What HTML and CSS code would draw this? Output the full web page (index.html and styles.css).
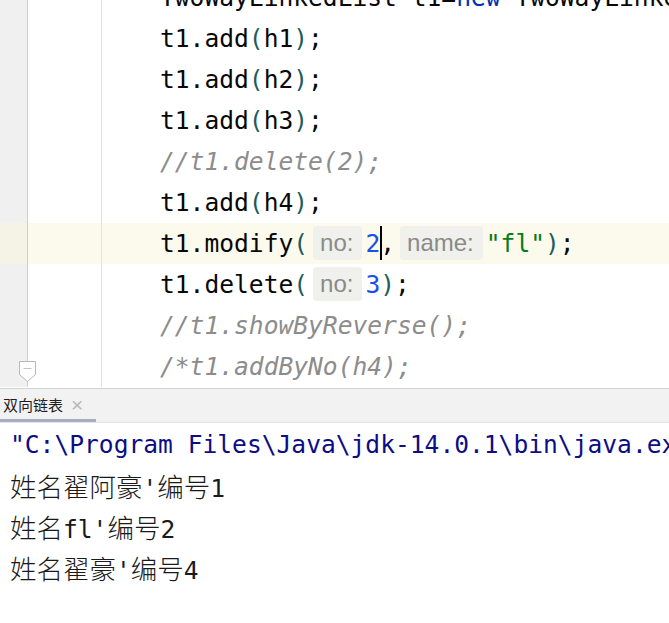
FILE: index.html
```html
<!DOCTYPE html>
<html lang="zh-CN">
<head>
    <meta charset="UTF-8">
    <title>双向链表</title>
    <link rel="stylesheet" href="styles.css">
</head>
<body>
    <!-- 编辑器区域 -->
    <div class="editor">
        <div class="lines">
            <div class="line"><div class="gut"></div><div class="fold"></div><div class="txt">TwoWayLinkedList t1=<span class="kw">new</span> TwoWayLinkedList();</div></div>
            <div class="line"><div class="gut"></div><div class="fold"></div><div class="txt">t1.add<span class="par">(</span>h1<span class="par">)</span>;</div></div>
            <div class="line"><div class="gut"></div><div class="fold"></div><div class="txt">t1.add<span class="par">(</span>h2<span class="par">)</span>;</div></div>
            <div class="line"><div class="gut"></div><div class="fold"></div><div class="txt">t1.add<span class="par">(</span>h3<span class="par">)</span>;</div></div>
            <div class="line"><div class="gut"></div><div class="fold"></div><div class="txt"><span class="cmt">//t1.delete(2);</span></div></div>
            <div class="line"><div class="gut"></div><div class="fold"></div><div class="txt">t1.add<span class="par">(</span>h4<span class="par">)</span>;</div></div>
            <div class="line current"><div class="gut"></div><div class="fold"></div><div class="txt">t1.modify<span class="par">(</span><span class="hint">no:</span><span class="num">2</span><span class="caret"></span>,<span class="hint">name:</span><span class="str">"fl"</span><span class="par">)</span>;</div></div>
            <div class="line"><div class="gut"></div><div class="fold"></div><div class="txt">t1.delete<span class="par">(</span><span class="hint">no:</span><span class="num">3</span><span class="par">)</span>;</div></div>
            <div class="line"><div class="gut"></div><div class="fold"></div><div class="txt"><span class="cmt">//t1.showByReverse();</span></div></div>
            <div class="line">
                <div class="gut"></div><div class="fold"></div><div class="txt"><span class="cmt">/*t1.addByNo(h4);</span></div>
                <!-- 折叠标记 -->
                <svg class="fold-mark" width="19" height="23" viewBox="0 0 19 23">
                    <path d="M1.5 1.5 H17.5 V14.5 L9.5 21.5 L1.5 14.5 Z" fill="#fff" stroke="#b8b8b8" stroke-width="1"/>
                    <path d="M5.5 8.5 H13.5" stroke="#c4c4c4" stroke-width="1"/>
                </svg>
            </div>
        </div>
    </div>

    <!-- 运行窗口 -->
    <div class="tabs">
        <div class="tab"><span class="tab-name">双向链表</span><span class="tab-close">×</span></div>
    </div>
    <div class="console">
        <div class="out sys">"C:\Program Files\Java\jdk-14.0.1\bin\java.exe" -javaagent:idea_rt.jar</div>
        <div class="out"><span class="zh">姓名翟阿豪</span>'<span class="zh">编号</span>1</div>
        <div class="out"><span class="zh">姓名</span>fl'<span class="zh">编号</span>2</div>
        <div class="out"><span class="zh">姓名翟豪</span>'<span class="zh">编号</span>4</div>
    </div>
</body>
</html>
```

FILE: styles.css
```css
body {
    margin: 0;
    width: 669px;
    height: 623px;
    overflow: hidden;
    background-color: white;
    font-family: 'DejaVu Sans Mono', 'Liberation Mono', 'Noto Sans CJK SC', monospace;
    font-size: 24.6px;
    color: #080808;
}

/* 编辑器 */
.editor {
    height: 388px;
    overflow: hidden;
    border-bottom: 1px solid #d4d4d4;
}
.lines {
    margin-top: -23px;
}
.line {
    display: flex;
    height: 41px;
    position: relative;
}
.gut {
    flex: 0 0 27px;
    background-color: #f0f0f0;
    border-right: 1px solid #cdcdcd;
}
.fold {
    flex: 0 0 73px;
    border-right: 1px solid #e2e2e2;
}
.txt {
    flex: 1;
    min-width: 0;
    overflow: hidden;
    padding-left: 58px;
    line-height: 41px;
    white-space: pre;
}
.current {
    background-color: #fcfaed;
}
.current .gut {
    background-color: #f5f3e5;
}
.fold-mark {
    position: absolute;
    left: 18px;
    top: 14px;
}

.kw { color: #0033b3; }
.par { color: #1d5c5c; }
.num { color: #1750eb; }
.str { color: #067d17; }
.cmt {
    color: #8c8c8c;
    font-style: italic;
}

/* 参数提示 */
.hint {
    display: inline-block;
    height: 34px;
    line-height: 34px;
    vertical-align: middle;
    margin: 0 3px 0 5px;
    padding: 0 9px 0 7px;
    border-radius: 4px;
    background-color: #f0f0ec;
    color: #8a8a8a;
    font-family: 'Liberation Sans', 'Noto Sans', sans-serif;
    font-size: 24px;
    position: relative;
    top: -2px;
}
.caret {
    display: inline-block;
    width: 2px;
    height: 34px;
    margin-right: -2px;
    background-color: #000;
    vertical-align: middle;
    position: relative;
    top: -2px;
}

/* 标签栏 */
.tabs {
    height: 33px;
    background-color: #f2f2f2;
    border-bottom: 1px solid #e4e4e4;
    display: flex;
}
.tab {
    width: 96px;
    box-sizing: border-box;
    padding-left: 3px;
    display: flex;
    align-items: center;
    gap: 8px;
    border-bottom: 3px solid #a9acc2;
}
.tab-name {
    font-family: 'Noto Sans CJK SC', sans-serif;
    font-size: 15px;
    color: #1e1e1e;
}
.tab-close {
    font-family: 'Liberation Sans', sans-serif;
    font-size: 21px;
    line-height: 1;
    color: #b8b8b8;
}

/* 控制台输出 */
.console {
    padding: 1px 0 0 10px;
}
.out {
    height: 41px;
    line-height: 41px;
    white-space: pre;
    color: #1a1a1a;
}
.out.sys {
    color: #0d0d85;
}
.zh {
    font-family: 'Noto Sans CJK SC', sans-serif;
    font-size: 26.5px;
    font-weight: 300;
}
```
